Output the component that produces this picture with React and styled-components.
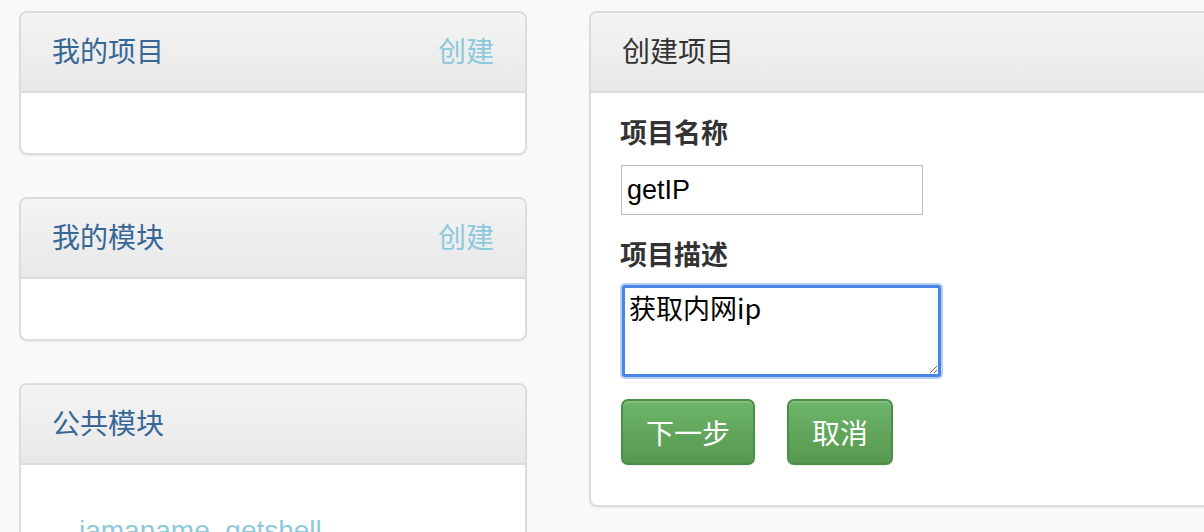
import React from 'react'
import styled, {createGlobalStyle} from 'styled-components'

const GlobalStyle = createGlobalStyle`
	html, body {
		margin: 0;
		padding: 0;
		background: #f9f9f9;
		overflow: hidden;
	}
	body {
		font-family: "Noto Sans CJK SC", "Liberation Sans", sans-serif;
		color: #333;
	}
`

const Page = styled.div`
	display: flex;
	align-items: flex-start;
	gap: 62px;
	padding: 11px 0 0 19px;
	width: 1400px;
	height: 521px;
	overflow: hidden;
`

const Column = styled.div`
	display: flex;
	flex-direction: column;
	gap: 42px;
	width: ${({width}) => width}px;
	flex-shrink: 0;
`

const Panel = styled.div`
	background: #fff;
	border: 2px solid #dcdcdc;
	border-radius: 8px;
	box-shadow: 0 1px 2px rgba(0, 0, 0, .05);
	overflow: hidden;
`

const Heading = styled.div`
	display: flex;
	align-items: center;
	justify-content: space-between;
	height: 80px;
	box-sizing: border-box;
	padding: 0 31px;
	background: linear-gradient(to bottom, #f4f4f4 0%, #e8e8e8 100%);
	border-bottom: 2px solid #dcdcdc;
`

const Title = styled.span`
	font-size: 28px;
	color: ${({dark}) => dark ? '#333' : '#366796'};
	line-height: 1;
	margin-top: -4px;
`

const CreateLink = styled.a`
	font-size: 28px;
	color: #8cc9dd;
	text-decoration: none;
	line-height: 1;
	margin-top: -4px;
	cursor: pointer;
`

const Body = styled.div`
	height: ${({h}) => h}px;
	padding: ${({pad}) => pad || '0'};
	box-sizing: border-box;
`

const ModuleLink = styled.a`
	display: block;
	font-family: "Liberation Sans", sans-serif;
	font-size: 28px;
	color: #8cc9dd;
	text-decoration: none;
	padding-left: 58px;
	line-height: 1;
`

const Form = styled.form`
	padding: 20px 29px 40px;
	display: flex;
	flex-direction: column;
	align-items: flex-start;
`

const Label = styled.label`
	font-size: 27px;
	font-weight: bold;
	color: #333;
	line-height: 37px;
	margin-bottom: ${({mb}) => mb}px;
`

const TextInput = styled.input`
	width: 302px;
	height: 50px;
	box-sizing: border-box;
	border: 1px solid #b9b9b9;
	border-radius: 0;
	padding: 0 5px;
	margin: 0 0 20px 1px;
	font-family: "Liberation Sans", sans-serif;
	font-size: 27px;
	color: #000;
	outline: none;
`

const TextArea = styled.textarea`
	width: 319px;
	height: 92px;
	box-sizing: border-box;
	border: 3px solid #4a84e4;
	border-radius: 3px;
	box-shadow: 0 0 0 2px #b7cff5;
	padding: 4px 4px;
	margin: 3px 0 22px 2px;
	font-family: "Noto Sans CJK SC", "Liberation Sans", sans-serif;
	font-size: 27px;
	line-height: 1.2;
	color: #000;
	outline: none;
	resize: both;
`

const Actions = styled.div`
	display: flex;
	gap: 32px;
	margin-left: 1px;
`

const Button = styled.button`
	height: 66px;
	padding: 0 23px;
	font-family: "Noto Sans CJK SC", sans-serif;
	font-size: 28px;
	color: #fff;
	background: linear-gradient(to bottom, #6db56a 0%, #57984f 100%);
	border: 2px solid #4e8d47;
	border-radius: 7px;
	box-shadow: inset 0 2px 0 rgba(255, 255, 255, .15), 0 1px 2px rgba(0, 0, 0, .08);
	cursor: pointer;
	line-height: 1;
`

export default function App() {
	return (
		<>
			<GlobalStyle/>
			<Page>
				<Column width={508}>
					<Panel>
						<Heading>
							<Title>我的项目</Title>
							<CreateLink>创建</CreateLink>
						</Heading>
						<Body h={60}/>
					</Panel>
					<Panel>
						<Heading>
							<Title>我的模块</Title>
							<CreateLink>创建</CreateLink>
						</Heading>
						<Body h={60}/>
					</Panel>
					<Panel>
						<Heading>
							<Title>公共模块</Title>
						</Heading>
						<Body h={200} pad="52px 0 0">
							<ModuleLink>iamaname_getshell</ModuleLink>
						</Body>
					</Panel>
				</Column>

				<Column width={660}>
					<Panel>
						<Heading>
							<Title dark>创建项目</Title>
						</Heading>
						<Form onSubmit={e => e.preventDefault()}>
							<Label mb={15}>项目名称</Label>
							<TextInput defaultValue="getIP"/>
							<Label mb={10}>项目描述</Label>
							<TextArea defaultValue="获取内网ip"/>
							<Actions>
								<Button type="submit">下一步</Button>
								<Button type="button">取消</Button>
							</Actions>
						</Form>
					</Panel>
				</Column>
			</Page>
		</>
	)
}
